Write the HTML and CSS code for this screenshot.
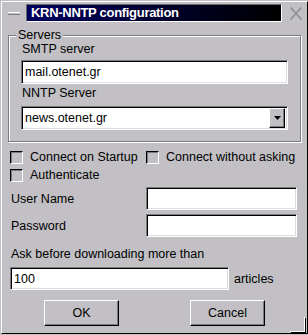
FILE: index.html
```html
<!DOCTYPE html>
<html lang="en">
<head>
  <meta charset="UTF-8" />
  <title>KRN-NNTP configuration</title>
  <link rel="stylesheet" href="styles.css">
</head>
<body>
  <div class="window">
    <div class="titlebar">
      <span class="menu-btn"></span>
      <div class="title">KRN-NNTP configuration</div>
      <svg class="close" width="12" height="13" viewBox="0 0 12 13">
        <path d="M0.5 0.5 L11.5 12.5 M11.5 0.5 L0.5 12.5" stroke="#8a898c" stroke-width="1.3" fill="none"/>
      </svg>
    </div>

    <div class="content">
      <fieldset class="group">
        <legend>Servers</legend>
        <div class="field-label">SMTP server</div>
        <div class="input">mail.otenet.gr</div>
        <div class="field-label second">NNTP Server</div>
        <div class="input combo">
          <span>news.otenet.gr</span>
          <span class="drop">
            <svg width="7" height="4" viewBox="0 0 7 4"><path d="M0 0 H7 L3.5 4 Z" fill="#000"/></svg>
          </span>
        </div>
      </fieldset>

      <div class="checks">
        <label class="check"><span class="box"></span>Connect on Startup</label>
        <label class="check"><span class="box"></span>Connect without asking</label>
        <label class="check"><span class="box"></span>Authenticate</label>
      </div>

      <div class="auth">
        <span class="auth-label">User Name</span>
        <div class="input"></div>
        <span class="auth-label">Password</span>
        <div class="input"></div>
      </div>

      <div class="ask">Ask before downloading more than</div>
      <div class="limit">
        <div class="input">100</div>
        <span>articles</span>
      </div>

      <div class="buttons">
        <button class="btn">OK</button>
        <button class="btn">Cancel</button>
      </div>
    </div>

    <span class="grip"></span>
  </div>
</body>
</html>
```

FILE: styles.css
```css
body {
  margin: 0;
  width: 308px;
  height: 335px;
  overflow: hidden;
  background: #c2c0c4;
  font-family: "Liberation Sans", Arial, sans-serif;
  font-size: 12.5px;
  color: #000;
}

.window {
  position: relative;
  box-sizing: border-box;
  width: 307px;
  height: 333px;
  margin: 1px 0 0 1px;
  border: 1px solid;
  border-color: #fff #000 #000 #fff;
}

/* title bar */
.titlebar {
  display: flex;
  align-items: center;
  height: 18px;
  margin-top: 2px;
}

.menu-btn {
  width: 12px;
  height: 1px;
  margin: 0 6px 0 6px;
  border-top: 1px solid #fff;
  border-bottom: 1px solid #7c7b7e;
}

.title {
  box-sizing: border-box;
  width: 256px;
  height: 18px;
  padding-left: 4px;
  border: 1px solid;
  border-color: #6a6a6a #fff #fff #6a6a6a;
  background: linear-gradient(to right, #00005e, #000);
  color: #fff;
  font-weight: bold;
  font-size: 13px;
  letter-spacing: -0.3px;
  line-height: 16px;
}

.close {
  margin-left: 8px;
}

/* body */
.content {
  padding: 0 0 0 8px;
}

.group {
  box-sizing: border-box;
  width: 293px;
  margin: 7px 0 0 -2px;
  padding: 0 12px 11px 12px;
  border: 1px solid #7c7b7e;
  box-shadow: inset 1px 1px 0 #fff, 1px 1px 0 #fff;
}

.group legend {
  margin-left: -5px;
  padding: 0 2px;
  line-height: 13px;
  background: #c2c0c4;
}

.field-label {
  line-height: 15px;
  padding-left: 1px;
}

.field-label.second {
  margin-top: 2px;
}

.input {
  box-sizing: border-box;
  height: 24px;
  margin-top: 3px;
  padding-left: 3px;
  border: 1px solid;
  border-color: #7c7b7e #fff #fff #7c7b7e;
  box-shadow: inset 1px 1px 0 #000, inset -1px -1px 0 #dedde0;
  background: #fff;
  line-height: 22px;
}

.field-label.second + .input {
  margin-top: 5px;
}

.combo {
  display: flex;
  justify-content: space-between;
  align-items: center;
  padding-right: 2px;
}

.drop {
  box-sizing: border-box;
  display: flex;
  justify-content: center;
  align-items: center;
  width: 16px;
  height: 20px;
  border: 1px solid;
  border-color: #fff #000 #000 #fff;
  box-shadow: inset -1px -1px 0 #7c7b7e;
  background: #c2c0c4;
}

/* checkboxes */
.checks {
  display: grid;
  grid-template-columns: 136px auto;
  margin-top: 6px;
}

.check {
  display: flex;
  align-items: center;
  height: 18px;
  white-space: nowrap;
}

.box {
  box-sizing: border-box;
  width: 13px;
  height: 13px;
  margin-right: 7px;
  border: 1px solid;
  border-color: #000 #fff #fff #000;
  box-shadow: inset 1px 1px 0 #7c7b7e;
}

/* user / password */
.auth {
  display: grid;
  grid-template-columns: 136px 151px;
  row-gap: 4px;
  align-items: center;
  margin-top: 3px;
}

.auth .input {
  height: 23px;
  margin-top: 0;
}

.auth-label {
  padding-left: 1px;
}

.ask {
  margin-top: 10px;
  padding-left: 1px;
  line-height: 15px;
}

.limit {
  display: flex;
  align-items: center;
  gap: 5px;
  margin-top: 5px;
}

.limit .input {
  width: 219px;
  height: 23px;
  margin-top: 0;
}

/* buttons */
.buttons {
  display: flex;
  gap: 71px;
  margin: 10px 0 0 34px;
}

.btn {
  box-sizing: border-box;
  width: 75px;
  height: 26px;
  padding: 0;
  border: 1px solid;
  border-color: #fff #000 #000 #fff;
  box-shadow: inset -1px -1px 0 #7c7b7e;
  background: #c2c0c4;
  font-family: "Liberation Sans", Arial, sans-serif;
  font-size: 12.5px;
  color: #000;
}

/* resize corner mark */
.grip {
  position: absolute;
  right: 2px;
  bottom: 1px;
  width: 14px;
  height: 14px;
  border-right: 1px solid #fff;
  border-bottom: 1px solid #fff;
  box-shadow: 1px 1px 0 #000;
}
```
